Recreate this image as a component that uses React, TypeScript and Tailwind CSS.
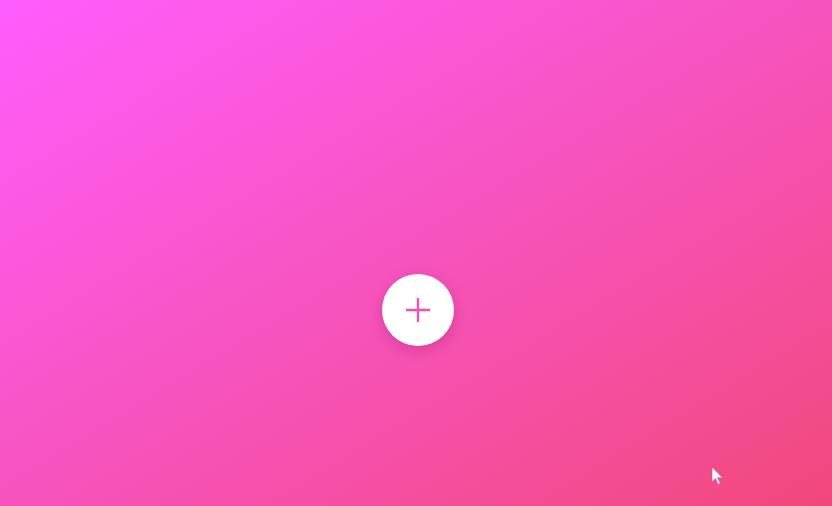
export default function App() {
  return (
    <div className="relative h-[506px] w-full overflow-hidden bg-gradient-to-br from-[#ff5cfe] via-[#f753be] to-[#f2477c] font-['Liberation_Sans',sans-serif]">
      <div className="flex justify-center pt-[274px] pl-[4px]">
        <button className="flex h-[72px] w-[72px] items-center justify-center rounded-full bg-white shadow-[0_4px_14px_rgba(150,20,110,0.3)]">
          <svg width="24" height="24" viewBox="0 0 24 24" fill="none" stroke="#f050b8" strokeWidth="2.4">
            <path d="M12 0v24M0 12h24" />
          </svg>
        </button>
      </div>

      {/* mouse pointer */}
      <svg className="absolute left-[711px] top-[466px]" width="13" height="20" viewBox="0 0 13 20">
        <path d="M1 1v15l3.5-3.4 2.6 5.9 2.2-1-2.6-5.7H11.5z" fill="#fff" stroke="#e8487e" strokeWidth="0.6" />
      </svg>
    </div>
  );
}
